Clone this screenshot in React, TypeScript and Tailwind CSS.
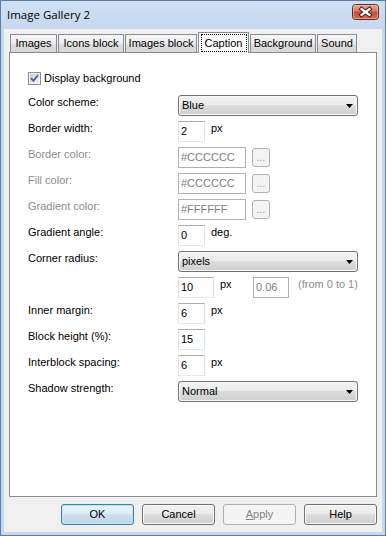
import React from "react";

function Label({ children, disabled }: { children?: React.ReactNode; disabled?: boolean }) {
  return (
    <div
      className={
        disabled
          ? "w-[150px] shrink-0 pt-[1px] leading-[13px] text-[#8d8d8d]"
          : "w-[150px] shrink-0 pt-[1px] leading-[13px] text-black"
      }
    >
      {children}
    </div>
  );
}

function Unit({ children, grey }: { children: React.ReactNode; grey?: boolean }) {
  return (
    <div className={grey ? "pt-[1px] leading-[13px] text-[#8d8d8d]" : "pt-[1px] leading-[13px] text-black"}>
      {children}
    </div>
  );
}

function Edit({ value, width, disabled }: { value: string; width: string; disabled?: boolean }) {
  return (
    <div
      className={
        disabled
          ? `${width} h-[21px] shrink-0 border border-[#b2b2b2] bg-white pl-[2px] flex items-center text-[#7f7f7f] leading-[13px]`
          : `${width} h-[21px] shrink-0 border border-t-[#abadb3] border-l-[#e2e3ea] border-r-[#dbdfe6] border-b-[#e3e9ef] bg-white pl-[2px] flex items-center text-black leading-[13px]`
      }
    >
      {value}
    </div>
  );
}

function DotsButton() {
  return (
    <div className="ml-[6px] mt-[1px] w-[18px] h-[19px] shrink-0 rounded-[3px] border border-[#adb2b5] bg-[#f4f4f4] flex items-end justify-center pb-[3px] text-[#9a9a9a] leading-[10px] text-[10px]">
      ...
    </div>
  );
}

function Select({ value }: { value: string }) {
  return (
    <div className="w-[180px] h-[21px] shrink-0 rounded-[3px] border border-[#707070] bg-[linear-gradient(to_bottom,#f2f2f2_0%,#ebebeb_50%,#dddddd_50%,#cfcfcf_100%)] shadow-[inset_0_0_0_1px_#fafafa] flex items-center justify-between pl-[3px] pr-[4px] text-black leading-[13px]">
      <span>{value}</span>
      <svg width="7" height="4" viewBox="0 0 7 4">
        <path d="M0 0 H7 L3.5 4 Z" fill="#000" />
      </svg>
    </div>
  );
}

function Row({ label, disabled, children }: { label?: string; disabled?: boolean; children: React.ReactNode }) {
  return (
    <div className="flex items-start h-[21px]">
      <Label disabled={disabled}>{label}</Label>
      {children}
    </div>
  );
}

function Tab({ label, width, selected }: { label: string; width: string; selected?: boolean }) {
  if (selected) {
    return (
      <div
        className={`${width} h-[21px] -mb-[1px] relative z-10 bg-white border border-b-0 border-[#898c95] flex justify-center pt-[1px]`}
      >
        <div className="w-[46px] h-[18px] border border-dotted border-black flex items-center justify-center leading-[13px]">
          {label}
        </div>
      </div>
    );
  }
  return (
    <div
      className={`${width} h-[18px] border border-b-0 border-[#898c95] bg-[linear-gradient(to_bottom,#f6f6f6_0%,#ececec_50%,#e0e0e0_50%,#d6d6d6_100%)] flex items-center justify-center leading-[13px]`}
    >
      {label}
    </div>
  );
}

function DlgButton({ label, kind }: { label: React.ReactNode; kind: "default" | "normal" | "disabled" }) {
  const cls =
    kind === "default"
      ? "w-[73px] h-[21px] rounded-[3px] border border-[#3c7fb1] bg-[linear-gradient(to_bottom,#eaf3f9_0%,#dfecf5_50%,#cde0ed_50%,#bfd6e7_100%)] shadow-[inset_0_0_0_1px_#bfe3f8] flex items-center justify-center text-black leading-[13px]"
      : kind === "normal"
      ? "w-[73px] h-[21px] rounded-[3px] border border-[#707070] bg-[linear-gradient(to_bottom,#f2f2f2_0%,#ebebeb_50%,#dddddd_50%,#cfcfcf_100%)] shadow-[inset_0_0_0_1px_#fafafa] flex items-center justify-center text-black leading-[13px]"
      : "w-[73px] h-[21px] rounded-[3px] border border-[#adb2b5] bg-[#f4f4f4] flex items-center justify-center text-[#838383] leading-[13px]";
  return <div className={cls}>{label}</div>;
}

export default function App() {
  return (
    <div className="w-[386px] h-[536px] border border-[#5f7ea5] bg-[#c6d8ef] flex flex-col [font-family:'Liberation_Sans',Arial,sans-serif] text-[11px] select-none">
      {/* Title bar */}
      <div className="h-[28px] shrink-0 flex items-start justify-between bg-[linear-gradient(to_bottom,#d0e0f3_0%,#c6d8ef_100%)]">
        <div className="pl-[6px] pt-[6px] text-[11.5px] leading-[15px] text-black [font-family:'Open_Sans',sans-serif]">
          Image Gallery 2
        </div>
        <div className="mt-[3px] mr-[6px]">
          <svg width="27" height="16" viewBox="0 0 27 16">
            <defs>
              <linearGradient id="closeg" x1="0" y1="0" x2="0" y2="1">
                <stop offset="0" stopColor="#e8aa9c" />
                <stop offset="0.45" stopColor="#d37a66" />
                <stop offset="0.5" stopColor="#c24b36" />
                <stop offset="1" stopColor="#d2705a" />
              </linearGradient>
            </defs>
            <rect x="0.5" y="0.5" width="26" height="15" rx="3" fill="url(#closeg)" stroke="#6a2a22" />
            <rect x="1.5" y="1.5" width="24" height="13" rx="2" fill="none" stroke="#f3c7bc" strokeOpacity="0.55" />
            <path d="M9.5 5 L17.5 11 M17.5 5 L9.5 11" stroke="#4b1f1a" strokeWidth="4.2" strokeLinecap="square" />
            <path d="M9.5 5 L17.5 11 M17.5 5 L9.5 11" stroke="#ffffff" strokeWidth="2.2" strokeLinecap="square" />
          </svg>
        </div>
      </div>

      {/* Client area */}
      <div className="flex-1 mx-[3px] mb-[3px] bg-[#f0f0f0] flex flex-col">
        {/* Tab strip */}
        <div className="mt-[3px] ml-[6px] h-[20px] flex items-end gap-[1px]">
          <Tab label="Images" width="w-[47px]" />
          <Tab label="Icons block" width="w-[66px]" />
          <Tab label="Images block" width="w-[72px]" />
          <Tab label="Caption" width="w-[51px]" selected />
          <Tab label="Background" width="w-[66px]" />
          <Tab label="Sound" width="w-[40px]" />
        </div>

        {/* Panel */}
        <div className="ml-[5px] mr-[5px] h-[445px] border border-[#898c95] bg-white pt-[19px] pl-[18px]">
          <div className="flex items-center h-[13px]">
            <svg width="13" height="13" viewBox="0 0 13 13">
              <defs>
                <linearGradient id="cbg" x1="0" y1="0" x2="1" y2="1">
                  <stop offset="0" stopColor="#c6cdd8" />
                  <stop offset="1" stopColor="#f4f5f7" />
                </linearGradient>
              </defs>
              <rect x="0.5" y="0.5" width="12" height="12" fill="#f4f4f4" stroke="#8e8f8f" />
              <rect x="2" y="2" width="9" height="9" fill="url(#cbg)" />
              <path d="M3 6.2 L5.4 8.8 L10 3.2" fill="none" stroke="#3b5795" strokeWidth="1.7" />
            </svg>
            <span className="ml-[3px] leading-[13px]">Display background</span>
          </div>

          <div className="mt-[10px] flex flex-col gap-[5px]">
            <Row label="Color scheme:">
              <Select value="Blue" />
            </Row>
            <Row label="Border width:">
              <Edit value="2" width="w-[27px]" />
              <div className="ml-[6px]">
                <Unit>px</Unit>
              </div>
            </Row>
            <Row label="Border color:" disabled>
              <Edit value="#CCCCCC" width="w-[68px]" disabled />
              <DotsButton />
            </Row>
            <Row label="Fill color:" disabled>
              <Edit value="#CCCCCC" width="w-[68px]" disabled />
              <DotsButton />
            </Row>
            <Row label="Gradient color:" disabled>
              <Edit value="#FFFFFF" width="w-[68px]" disabled />
              <DotsButton />
            </Row>
            <Row label="Gradient angle:">
              <Edit value="0" width="w-[27px]" />
              <div className="ml-[6px]">
                <Unit>deg.</Unit>
              </div>
            </Row>
            <Row label="Corner radius:">
              <Select value="pixels" />
            </Row>
            <Row>
              <Edit value="10" width="w-[36px]" />
              <div className="ml-[6px] w-[33px] shrink-0">
                <Unit>px</Unit>
              </div>
              <Edit value="0.06" width="w-[36px]" disabled />
              <div className="ml-[9px]">
                <Unit grey>(from 0 to 1)</Unit>
              </div>
            </Row>
            <Row label="Inner margin:">
              <Edit value="6" width="w-[27px]" />
              <div className="ml-[6px]">
                <Unit>px</Unit>
              </div>
            </Row>
            <Row label="Block height (%):">
              <Edit value="15" width="w-[27px]" />
            </Row>
            <Row label="Interblock spacing:">
              <Edit value="6" width="w-[27px]" />
              <div className="ml-[6px]">
                <Unit>px</Unit>
              </div>
            </Row>
            <Row label="Shadow strength:">
              <Select value="Normal" />
            </Row>
          </div>
        </div>

        {/* Buttons */}
        <div className="mt-[7px] mr-[5px] flex justify-end gap-[8px]">
          <DlgButton label="OK" kind="default" />
          <DlgButton label="Cancel" kind="normal" />
          <DlgButton
            label={
              <span>
                <span className="underline">A</span>pply
              </span>
            }
            kind="disabled"
          />
          <DlgButton label="Help" kind="normal" />
        </div>
      </div>
    </div>
  );
}
